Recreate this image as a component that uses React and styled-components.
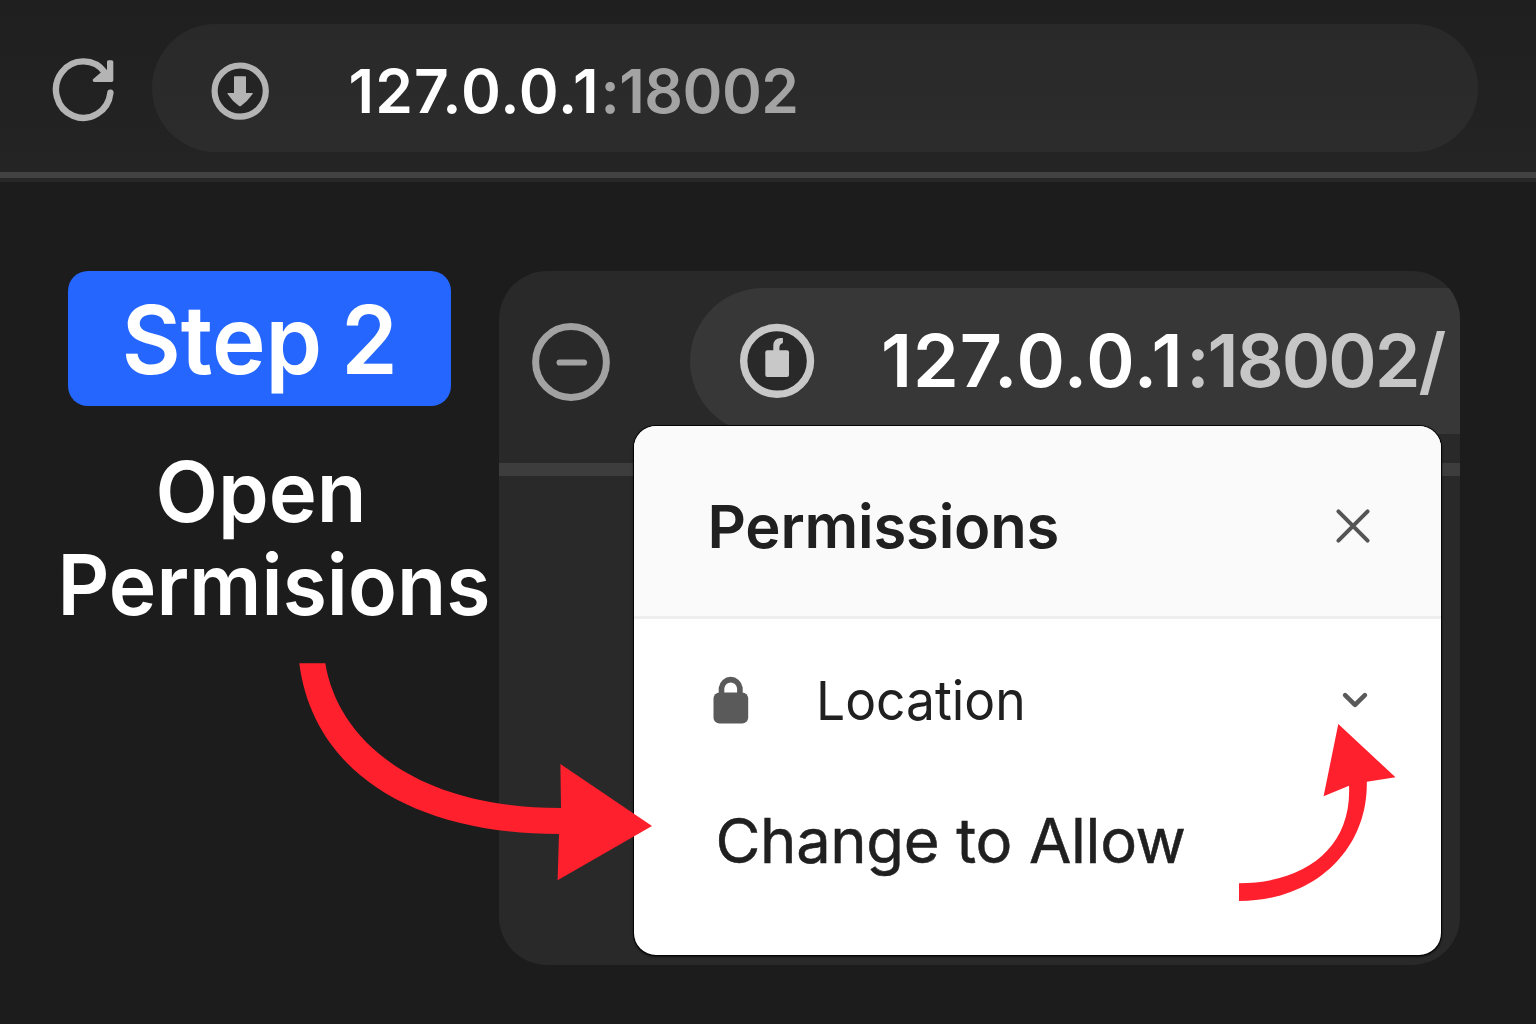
import React from 'react';
import styled, { createGlobalStyle } from 'styled-components';

const GlobalStyle = createGlobalStyle`
  * { box-sizing: border-box; }
  body { margin: 0; background: #1c1c1c; }
`;

const Page = styled.div`
  position: relative;
  width: 1536px;
  height: 1024px;
  overflow: hidden;
  display: flex;
  flex-direction: column;
  background: #1c1c1c;
  font-family: Inter, "Liberation Sans", sans-serif;
`;

const Toolbar = styled.header`
  display: flex;
  align-items: center;
  gap: 36px;
  height: 182px;
  flex: none;
  padding: 24px 58px 20px 52px;
  background: linear-gradient(#1f1f1f, #242424);
  border-bottom: 4px solid #272727;
  box-shadow: inset 0 -6px 0 #424242;
`;

const AddressBar = styled.div`
  display: flex;
  align-items: center;
  flex: 1;
  height: 128px;
  margin-bottom: 6px;
  padding: 5px 0 0 58px;
  border-radius: 64px;
  background: linear-gradient(#292929, #2c2c2c);
`;

const ReloadIcon = styled.svg`
  width: 64px;
  height: 68px;
  flex: none;
`;

const RoundIcon = styled.svg`
  width: ${(p) => p.$size}px;
  height: ${(p) => p.$size}px;
  flex: none;
`;

const Url = styled.div`
  display: flex;
  align-items: center;
  white-space: nowrap;
  line-height: 1.2;
  font-size: ${(p) => p.$size}px;
  font-weight: 600;
  padding-top: ${(p) => p.$drop || 0}px;
  margin-left: ${(p) => p.$gap}px;
`;

const Host = styled.span`
  color: #fff;
  letter-spacing: ${(p) => p.$track}px;
`;

const Port = styled.span`
  color: ${(p) => p.$tone};
  letter-spacing: ${(p) => p.$track}px;
  margin-left: ${(p) => p.$shift}px;
`;

const Main = styled.main`
  display: flex;
  align-items: flex-start;
  flex: 1;
  padding-top: 89px;
`;

const Guide = styled.section`
  display: flex;
  flex-direction: column;
  align-items: center;
  width: 499px;
  flex: none;
  padding: 0 48.5px 0 68px;
`;

const Badge = styled.div`
  display: flex;
  align-items: center;
  justify-content: center;
  width: 382.5px;
  height: 135px;
  padding-top: 1px;
  border-radius: 20px;
  background: #2566ff;
`;

const Narrow = styled.span`
  display: block;
  white-space: nowrap;
  transform: scaleX(${(p) => p.$scale});
`;

const BadgeText = styled(Narrow)`
  color: #fff;
  font-size: 94.5px;
  font-weight: 600;
  line-height: 135px;
  word-spacing: -4px;
`;

const Instruction = styled.h1`
  display: flex;
  flex-direction: column;
  align-items: center;
  margin: 39px 0 0;
  color: #fff;
  font-size: 84px;
  font-weight: 600;
  line-height: 93px;
`;

const ShortLine = styled(Narrow)`
  margin-left: 3px;
`;

const LongLine = styled(Narrow)`
  margin-left: 30px;
`;

const Preview = styled.section`
  position: relative;
  width: 961px;
  height: 694px;
  border-radius: 48px;
  overflow: hidden;
  background: #292929;
`;

const PreviewBar = styled.div`
  display: flex;
  align-items: flex-start;
  height: 205px;
  padding: 17px 0 0 32px;
  border-bottom: 13px solid #3d3d3d;
`;

const PreviewBack = styled.div`
  display: flex;
  align-items: center;
  height: 147px;
  width: 159px;
  flex: none;
`;

const PreviewAddress = styled.div`
  display: flex;
  align-items: center;
  flex: 1;
  height: 146px;
  padding-left: 49px;
  border-radius: 73px 0 0 73px;
  background: #373737;
`;

const Popup = styled.div`
  position: absolute;
  left: 135px;
  top: 155px;
  width: 807px;
  height: 529px;
  border-radius: 22px;
  background: #fff;
  box-shadow: 0 0 0 1px #050505, 0 1px 2px 1px rgba(0, 0, 0, 0.6);
  color: #202020;
`;

const PopupHeader = styled.div`
  display: flex;
  align-items: center;
  justify-content: space-between;
  height: 193px;
  padding: 9px 69px 0 73.5px;
  border-bottom: 3px solid #eeeeee;
  border-radius: 22px 22px 0 0;
  background: #fafafa;
`;

const PopupTitle = styled.h2`
  margin: 0;
  font-size: 59.7px;
  font-weight: 600;
  line-height: 72px;
  letter-spacing: -0.2px;
`;

const CloseIcon = styled.svg`
  width: 38px;
  height: 38px;
`;

const PermissionRow = styled.div`
  display: flex;
  align-items: center;
  height: 163px;
  padding: 0 71px 0 79px;
`;

const LockIcon = styled.svg`
  width: 36px;
  height: 50px;
  margin-bottom: 2px;
  flex: none;
`;

const PermissionName = styled(Narrow)`
  flex: 1;
  margin-left: 67px;
  font-size: 54px;
  line-height: 66px;
  transform-origin: left;
`;

const ChevronIcon = styled.svg`
  width: 30px;
  height: 20px;
  margin-bottom: 2px;
`;

const Hint = styled.p`
  margin: 22px 0 0 81.5px;
  font-size: 61.5px;
  line-height: 74px;
  letter-spacing: -0.33px;
  white-space: nowrap;
  -webkit-text-stroke: 0.5px #202020;
`;

const ArrowLayer = styled.svg`
  position: absolute;
  inset: 0;
  width: 1536px;
  height: 1024px;
  pointer-events: none;
`;

export default function App() {
  return (
    <Page>
      <GlobalStyle />
      <Toolbar>
        <ReloadIcon viewBox="52 56 64 68" fill="none" stroke="#b4b4b4" strokeLinecap="round" strokeLinejoin="round">
          <path d="M105.2 71.8A27.3 28.2 0 1 0 110.4 91.8" strokeWidth="6.4" />
          <path d="M108.6 60.8L111.7 60.8V79.3H94.3L102.5 72.2L108.6 70Z" fill="#b4b4b4" strokeWidth="3.2" />
        </ReloadIcon>
        <AddressBar>
          <RoundIcon $size={60} viewBox="210.3 60.7 60 60" fill="#b4b4b4">
            <circle cx="240.5" cy="90.8" r="25.6" fill="#242424" stroke="#b4b4b4" strokeWidth="6.2" />
            <path d="M235 76H245.6Q246.3 76 246.3 76.7V92.7H252.5Q253.6 92.7 252.9 93.8Q248 101 241.2 105.6Q240.3 106.3 239.4 105.6Q232.5 101 227.9 93.8Q227.2 92.7 228.3 92.7H234.3V76.7Q234.3 76 235 76Z" />
          </RoundIcon>
          <Url $size={60.5} $drop={2} $gap={78.5}>
            <Host $track={1.05}>127.0.0.1</Host>
            <Port $tone="#a3a3a3" $track={-0.5} $shift={0.7}>:18002</Port>
          </Url>
        </AddressBar>
      </Toolbar>

      <Main>
        <Guide>
          <Badge>
            <BadgeText $scale={0.96}>Step 2</BadgeText>
          </Badge>
          <Instruction>
            <ShortLine $scale={0.968}>Open</ShortLine>
            <LongLine $scale={0.958}>Permisions</LongLine>
          </Instruction>
        </Guide>

        <Preview>
          <PreviewBar>
            <PreviewBack>
              <RoundIcon $size={80} viewBox="530.7 321.7 80 80" fill="none" stroke="#a2a2a2">
                <circle cx="570.7" cy="361.7" r="35.4" strokeWidth="7" />
                <path d="M559.3 362.2H583.7" strokeWidth="6.2" strokeLinecap="round" />
              </RoundIcon>
            </PreviewBack>
            <PreviewAddress>
              <RoundIcon $size={76} viewBox="739 323.7 76 76" fill="#c8c8c8">
                <circle cx="777.1" cy="361.6" r="33.4" fill="#292929" stroke="#c8c8c8" strokeWidth="7.4" />
                <rect x="765.3" y="351" width="23.7" height="26.7" rx="2" />
                <path d="M773.3 353V346.5Q773.3 339.3 780.5 338.6H782.9V343.8Q779.4 344.8 779.4 348.5V353Z" />
              </RoundIcon>
              <Url $size={73.5} $gap={66}>
                <Host $track={1}>127.0.0.1</Host>
                <Port $tone="#c6c6c6" $track={-2} $shift={2.5}>:18002/</Port>
              </Url>
            </PreviewAddress>
          </PreviewBar>

          <Popup>
            <PopupHeader>
              <PopupTitle>Permissions</PopupTitle>
              <CloseIcon viewBox="-19 -19 38 38" stroke="#555" strokeWidth="4" strokeLinecap="round">
                <path d="M-14.6 -14.6L14.6 14.6M14.6 -14.6L-14.6 14.6" />
              </CloseIcon>
            </PopupHeader>
            <PermissionRow>
              <LockIcon viewBox="713.5 675 36 50">
                <path d="M722 694V688A9.3 9.8 0 0 1 740.4 688V694" fill="none" stroke="#5a5a5a" strokeWidth="5.6" />
                <rect x="714" y="692.5" width="34.7" height="31" rx="6" fill="#5a5a5a" />
              </LockIcon>
              <PermissionName $scale={0.955}>Location</PermissionName>
              <ChevronIcon viewBox="-15 -10 30 20" fill="none" stroke="#5a5a5a" strokeWidth="4.6" strokeLinecap="round" strokeLinejoin="round">
                <path d="M-9.9 -4.9L0 4.9L9.9 -4.9" />
              </ChevronIcon>
            </PermissionRow>
            <Hint>Change to Allow</Hint>
          </Popup>
        </Preview>
      </Main>

      <ArrowLayer viewBox="0 0 1536 1024" fill="#ff202d">
        <path d="M299.3 663.3H325.3C338 740 415 808 561 808L560.4 764L652 826L557.6 880.3L559 834C410 834 313 770 299.3 663.3Z" />
        <path d="M1239 883.3C1305 883 1352 848 1349 785.7L1323.6 796.3L1338.3 724L1395.5 777.3L1366.8 781.7C1368 850 1314 901 1239 901Z" />
      </ArrowLayer>
    </Page>
  );
}
